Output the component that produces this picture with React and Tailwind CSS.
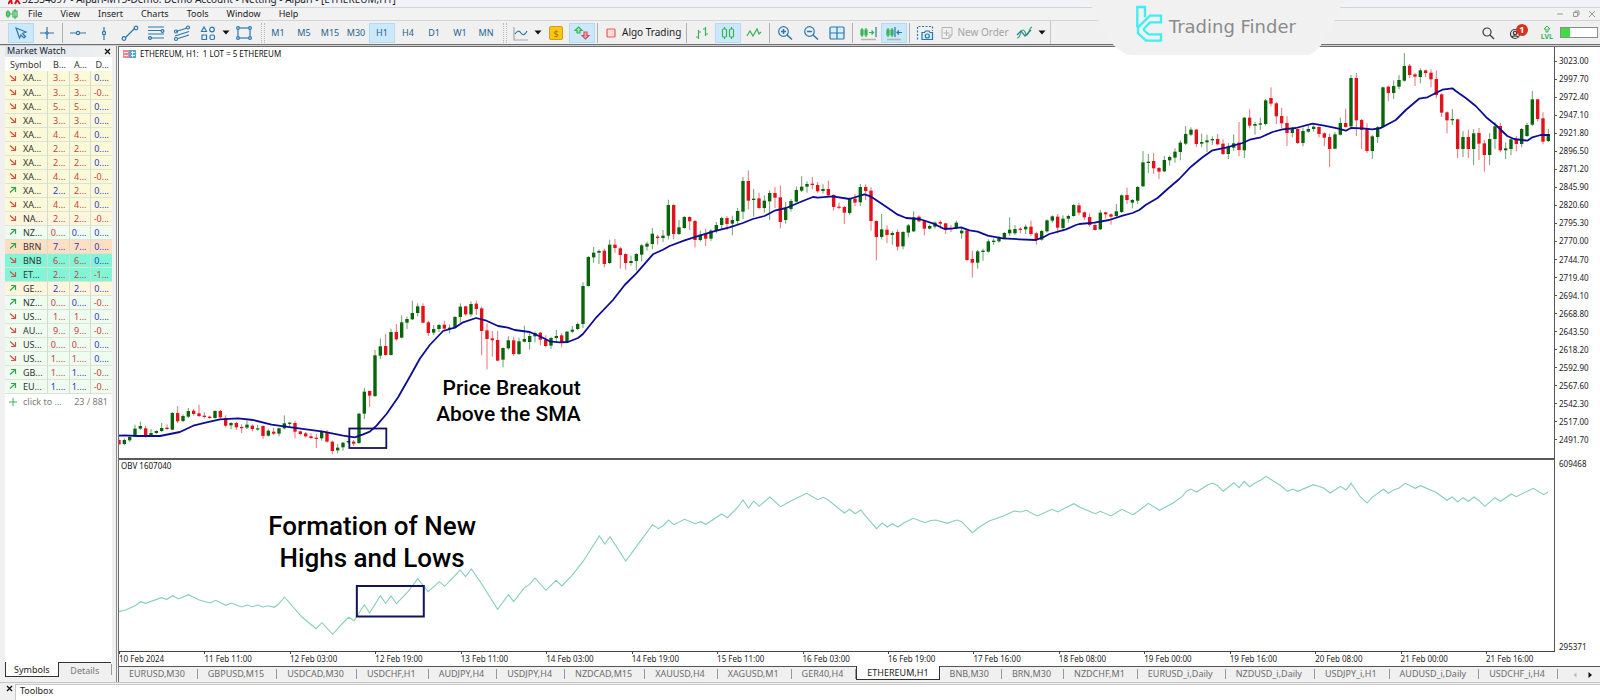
import React from 'react';

const BLUE = '#2a78ad';
const GREEN = '#35b558';

// --- CHART DATA ---
// Every candle: direction (g up, r down), high, body top, body bottom, low.
// Values are thirds of a pixel below the span's own top.
const CANDLE_SPANS = [
  {
    top: 213,
    rows:
      'r 536 540 553 553,g 535 540 552 556,g 528 531 541 545,g 494 506 528 531,g 485 498 506 510,r 498 505 530 533,g 507 519 527 531,g 511 513 519 522,g 489 504 513 516,r 493 503 507 510,g 456 459 509 511,r 438 459 484 489,g 463 468 483 487,g 444 453 470 474,r 447 452 462 467,r 434 460 468 472,r 457 467 471 475,r 467 470 474 476,g 451 453 474 476,r 450 453 472 476,r 466 474 497 502,g 486 489 496 508,r 486 489 502 510,r 493 501 504 519,g 481 494 503 507,r 493 497 507 514,g 495 505 508 512,r 496 498 528 537,g 508 512 527 530,r 504 515 521 525,' +
      'g 502 505 521 529,g 466 490 505 508,g 486 488 491 502,r 482 489 515 535,r 512 514 522 526,r 516 520 529 533,r 520 529 534 537,r 522 533 536 564,g 512 515 535 542,r 510 516 545 548,r 542 545 573 583,g 552 563 571 580,g 546 548 562 572,g 530 543 547 552,r 540 545 551 558,g 458 461 549 552,g 384 395 461 477,r 391 393 407 441,g 270 286 408 411,g 235 259 287 297,r 222 258 285 287,g 206 216 285 287,r 192 216 238 242,g 166 187 233 235,g 170 177 188 207,g 122 159 178 180,g 130 139 159 169,r 130 138 188 190,r 182 187 219 228,g 195 207 218 225,' +
      'g 192 195 207 216,r 182 194 206 213,g 193 203 207 220,g 168 171 203 206,g 130 140 171 188,r 137 139 163 167,g 124 132 163 170,r 122 131 147 165,r 140 145 213 286,r 190 211 237 328,r 213 235 241 290,r 213 240 302 304,g 262 264 299 322,g 229 241 265 269,r 230 241 282 288,g 233 244 282 285,g 197 237 245 247,g 214 228 246 269,g 214 219 229 247,r 216 218 239 256,r 226 239 258 262,g 230 234 257 267,g 210 228 234 242,r 220 226 246 262,g 213 215 244 247,g 198 209 215 220,g 188 192 207 210,g 67 78 192 204',
  },
  {
    top: 103,
    rows:
      'g 318 321 408 410,g 291 308 322 338,g 298 303 308 342,r 296 302 342 352,g 269 284 339 342,r 267 284 294 308,r 291 295 315 356,r 310 312 339 359,g 317 333 339 347,g 309 312 333 361,g 282 286 314 334,g 275 281 290 302,g 234 251 282 298,r 254 260 264 284,g 240 257 264 276,g 149 165 257 268,r 163 165 252 268,g 210 232 252 255,g 198 201 234 236,r 199 201 214 240,r 210 213 270 292,g 242 254 270 275,r 236 252 266 288,g 238 242 266 273,g 216 225 243 250,g 200 204 225 238,r 198 204 222 240,g 197 210 221 256,g 174 183 213 222,g 81 93 185 207,' +
      'r 61 93 152 178,g 117 146 150 200,r 128 145 174 178,g 136 152 174 188,g 121 129 154 210,r 111 129 143 174,r 106 142 216 235,g 156 176 210 221,g 147 153 177 185,g 109 120 155 158,g 79 110 122 126,g 94 102 110 128,r 81 101 105 118,r 96 105 124 128,g 103 117 123 130,r 92 117 136 138,r 132 135 171 182,r 158 170 173 178,r 168 171 188 222,g 142 146 189 195,r 132 146 158 168,g 102 111 157 168,r 103 111 123 150,r 112 122 213 242,r 211 213 261 331,g 192 238 261 268,r 226 239 255 279,g 244 249 255 284,r 238 246 290 302,g 243 246 289 298,g 222 226 248 262,' +
      'g 184 202 244 246,r 196 200 214 217,r 211 213 236 256,g 224 228 236 238,g 214 218 230 236,r 211 216 221 236,r 218 220 238 252,r 225 234 238 246,g 212 218 235 238,g 232 242 250 266,r 239 241 330 334,r 302 327 338 383,g 300 304 338 356,g 296 302 306 332,g 268 274 305 308,g 265 272 276 284,g 258 262 274 278,g 246 249 264 268,g 202 239 250 258,g 225 237 250 254,r 232 236 239 250,g 224 230 238 252,r 212 230 252 258,r 246 250 269 284,g 240 243 269 272,g 208 211 244 248,g 196 199 212 218,r 192 200 233 250,g 196 206 234 244,g 194 198 206 218,g 162 165 198 200,r 158 166 188 196,r 185 187 202 210',
  },
  {
    top: -7,
    rows:
      'r 520 531 555 560,r 550 555 570 572,g 510 518 568 570,r 515 517 523 535,r 520 523 530 554,g 492 514 528 531,g 463 466 516 519,r 443 465 480 492,g 477 480 488 505,g 438 441 482 492,g 333 367 439 441,g 342 365 369 399,r 339 363 385 402,r 381 384 395 417,g 348 360 394 396,g 347 351 361 377,g 325 335 353 368,g 301 308 336 361,g 258 282 311 315,g 262 269 284 288,r 267 269 312 321,g 281 306 311 322,g 284 301 307 336,g 289 297 301 315,r 282 297 313 316,r 298 311 342 345,g 309 321 342 357,g 283 310 323 333,r 246 308 330 348,g 231 233 331 354,' +
      'r 208 233 257 265,g 246 252 257 284,g 233 250 254 270,g 177 181 252 256,r 142 174 191 199,r 186 190 229 252,r 203 228 250 264,r 229 249 279 318,g 261 266 279 292,r 265 267 309 312,g 262 273 309 319,g 257 267 275 278,g 256 260 267 275,r 259 261 282 292,r 277 280 293 318,r 281 291 327 381,g 276 283 326 328,g 233 249 284 287,r 206 249 261 263,g 105 114 259 265,r 99 114 241 288,r 237 240 270 327,r 250 264 333 339,g 285 289 333 357,g 258 262 291 309,g 140 142 261 264,r 137 140 159 184,g 121 138 159 177,g 105 120 140 148,g 39 78 122 125,' +
      'r 72 77 105 114,r 100 103 110 138,g 85 91 111 130,r 89 91 99 112,r 88 98 118 142,r 92 117 165 174,r 160 163 218 231,r 214 217 241 280,g 207 237 241 255,r 236 238 327 354,g 273 291 327 352,r 269 291 327 354,g 268 280 327 375,r 264 279 311 360,r 300 310 345 395,g 279 297 345 375,g 247 259 297 327,r 248 258 331 337,g 307 325 331 357,g 295 298 327 346,r 288 299 312 334,g 264 267 312 322,g 249 255 288 291,g 153 178 254 258,r 176 178 237 244,r 217 235 305 313,g 267 283 303 306',
  },
];

const CANDLES = CANDLE_SPANS.flatMap(({ top, rows }) =>
  rows.split(',').map((row) => {
    const [dir, ...v] = row.split(' ');
    const [high, open, close, low] = v.map((n) => top + Number(n) / 3);
    return { dir, high, open, close, low };
  })
);

const toPoints = (spans) =>
  spans
    .flatMap(({ x, y, sx, pts }) =>
      pts.split(' ').map((p) => {
        const [px, py] = p.split(',').map(Number);
        return `${(x + px / sx).toFixed(1)},${(y + py / 3).toFixed(1)}`;
      })
    )
    .join(' ');

const SMA = toPoints([
  { x: -9, y: 213, sx: 3, pts: '27,527 45,526 80,528 150,528 210,516 250,497 290,487 330,478 385,475 430,480 485,494 550,503 640,515 700,527 735,532 760,523 780,515 800,497 830,462 865,412 900,350 930,296 960,255 1000,213 1035,203 1060,187 1099,174 1130,182 1165,198 1195,203 1215,210 1260,216 1295,231 1320,244 1350,247 1375,246 1405,234' },
  { x: 451, y: 103, sx: 3, pts: '40,552 80,502 130,450 165,405 200,370 250,313 280,299 300,288 345,271 380,260 430,245 480,232 520,219 550,207 585,198 615,182 650,174 700,153 730,141 745,143 790,139 840,147 885,133 905,140 950,170 985,194 1010,204 1050,207 1090,220 1125,237 1150,235 1175,232 1200,241 1225,245 1255,257 1300,265 1350,268 1400,270 1425,260 1440,252 1490,238 1520,225' },
  { x: 961, y: -7, sx: 3, pts: '0,552 45,548 90,540 130,527 160,519 180,510 200,494 235,474 265,447 300,417 335,380 370,352 400,331 440,323 490,309 515,298 545,292 580,276 610,268 650,264 700,251 735,257 775,265 800,272 815,264 850,265 880,268 905,264 950,240 980,210 1020,176 1045,172 1090,149 1120,145 1130,153 1160,174 1190,198 1225,235 1250,255 1285,288 1305,297 1345,302 1360,292 1385,285 1412,285' },
]);

const OBV = toPoints([
  { x: -9, y: -10, sx: 2.24, pts: '20,485 35,480 55,468 69,455 80,460 115,443 127,448 141,437 153,447 176,434 200,450 224,459 237,451 260,466 272,459 295,471 307,465 319,470 331,465 343,471 355,467 368,472 378,462 391,441 430,501 462,536 475,518 499,553 520,522 535,502 547,512 570,464 582,489 606,437 618,460 630,438 642,461 668,425 690,386 713,425 738,395 750,409 785,360 797,380 810,357 830,395 869,478 893,434 905,455 929,413 940,404 953,384 977,421 1000,391 1013,408 1035,377 1060,335 1097,258 1109,282 1121,260 1156,333 1190,271 1216,224 1229,236 1240,227 1252,210 1264,224 1288,208 1312,221 1324,215 1336,223 1371,192 1384,203 1408,170 1419,150 1431,174 1443,153 1455,169 1479,141 1503,170 1525,154' },
  { x: 681, y: -10, sx: 1.96, pts: '14,130 36,149 47,142 58,152 88,189 98,178 109,191 120,180 132,202 151,236 162,219 172,231 182,221 193,231 205,218 223,205 246,218 256,212 267,210 290,220 308,210 318,215 339,248 350,234 372,213 400,198 421,183 434,186 445,181 466,198 495,178 507,186 520,175 538,161 550,172 580,191 590,184 611,198 632,178 654,194 670,177 684,160 706,181 732,160 750,140 760,122 768,117 779,126 800,105 810,99 820,107 831,124 852,98 862,113 872,94 883,110 893,99 904,91 915,79 945,108 957,124 967,117 977,124 1008,104 1028,114 1041,129 1061,109 1072,120 1082,100 1100,141 1113,159 1123,142 1145,118 1155,130 1165,120 1176,114 1188,100 1208,115 1218,107 1248,127 1270,151 1280,141 1291,156 1301,143 1312,154 1323,141 1333,152 1344,169 1364,143 1375,154 1396,132 1406,140 1439,115 1460,134 1468,126' },
]);

const PRICES = Array.from({ length: 22 }, (_, i) => (3023 - i * 25.3).toFixed(2));

const TIMES = [
  '10 Feb 2024', '11 Feb 11:00', '12 Feb 03:00', '12 Feb 19:00', '13 Feb 11:00', '14 Feb 03:00',
  '14 Feb 19:00', '15 Feb 11:00', '16 Feb 03:00', '16 Feb 19:00', '17 Feb 16:00', '18 Feb 08:00',
  '19 Feb 00:00', '19 Feb 16:00', '20 Feb 08:00', '21 Feb 00:00', '21 Feb 16:00',
];

const CHART_TABS = [
  'EURUSD,M30', 'GBPUSD,M15', 'USDCAD,M30', 'USDCHF,H1', 'AUDJPY,H4', 'USDJPY,H4', 'NZDCAD,M15',
  'XAUUSD,H4', 'XAGUSD,M1', 'GER40,H4', 'ETHEREUM,H1', 'BNB,M30', 'BRN,M30', 'NZDCHF,M1',
  'EURUSD_i,Daily', 'NZDUSD_i,Daily', 'USDJPY_i,H1', 'AUDUSD_i,Daily', 'USDCHF_i,H4',
];

// --- MARKET WATCH DATA ---
// arrow, symbol, bid, ask, daily, colours of the three numbers, row tint
const QUOTES = [
  ['d', 'XA...', '3...', '3...', '0....', 'rrb', 'y'],
  ['d', 'XA...', '3...', '3...', '-0...', 'rrr', 'y'],
  ['d', 'XA...', '5...', '5...', '0....', 'rrb', 'y'],
  ['d', 'XA...', '3...', '3...', '0....', 'rrb', 'y'],
  ['d', 'XA...', '4...', '4...', '0....', 'rrb', 'y'],
  ['d', 'XA...', '2...', '2...', '0....', 'rrb', 'y'],
  ['d', 'XA...', '2...', '2...', '0....', 'rrb', 'y'],
  ['d', 'XA...', '4...', '4...', '-0...', 'rrr', 'y'],
  ['u', 'XA...', '2...', '2...', '0....', 'brb', 'y'],
  ['d', 'XA...', '4...', '4...', '0....', 'rrb', 'y'],
  ['d', 'NA...', '2...', '2...', '-0...', 'rrr', 'c'],
  ['u', 'NZ...', '0....', '0....', '0....', 'rbb', 'g'],
  ['u', 'BRN', '7...', '7...', '0....', 'bbb', 'o'],
  ['d', 'BNB', '6...', '6...', '0....', 'rrb', 't'],
  ['d', 'ET...', '2...', '2...', '-1...', 'rrr', 't'],
  ['u', 'GE...', '2...', '2...', '0....', 'bbb', 'c'],
  ['u', 'NZ...', '0....', '0....', '-0...', 'rbr', 'g'],
  ['d', 'US...', '1...', '1...', '0....', 'rrb', 'g'],
  ['d', 'AU...', '9...', '9...', '-0...', 'rrr', 'g'],
  ['d', 'US...', '0....', '0....', '0....', 'rrb', 'g'],
  ['d', 'US...', '1....', '1....', '0....', 'rrb', 'g'],
  ['u', 'GB...', '1....', '1....', '-0...', 'rbr', 'g'],
  ['u', 'EU...', '1....', '1....', '-0...', 'bbr', 'g'],
];

const TINT = {
  y: 'bg-[#fbfad8]',
  c: 'bg-[#fdf6dc]',
  g: 'bg-[#effcf0]',
  o: 'bg-[#ffdfc2]',
  t: 'bg-[#80f6d6]',
};
const INK = { r: 'text-[#c4443c]', b: 'text-[#3434c4]' };

// --- SMALL PARTS ---
const Icon = ({ children, color = BLUE, w = 18, className = '' }) => (
  <svg width={w} height="18" viewBox={`0 0 ${w} 18`} fill="none" stroke={color} strokeWidth="1.2" className={`shrink-0 ${className}`}>
    {children}
  </svg>
);

const Tool = ({ label, active, children }) => (
  <button
    aria-label={label}
    className={`flex h-5 w-[26px] shrink-0 items-center justify-center ${active ? 'bg-[#cce8fb] outline outline-1 -outline-offset-1 outline-[#b4daf4]' : ''}`}
  >
    {children}
  </button>
);

const Sep = () => <div className="mx-[2px] h-5 w-px shrink-0 bg-[#b0b0b0]" />;
const Grip = () => <div className="ml-1 h-5 w-1 shrink-0 border-x border-dotted border-[#b8b8b8]" />;
const Caret = () => (
  <svg width="8" height="5" viewBox="0 0 8 5" className="mx-px shrink-0">
    <path d="M0.5 0.5H7.5L4 4.5Z" fill="#111" />
  </svg>
);

const TitleBar = () => (
  <header className="flex h-[7px] items-end overflow-hidden bg-[#f2f3f9] pl-2">
    <svg width="14" height="7" viewBox="0 0 14 7" className="shrink-0">
      <path d="M0 4L3 0L4 4M7 4L9 0L12 4" stroke="#d01818" strokeWidth="2" fill="none" />
    </svg>
    <h1 className="pb-[3px] text-[10px] leading-[10px] whitespace-nowrap text-[#222]">
      52534097 - Alpari-MT5-Demo: Demo Account - Netting - Alpari - [ETHEREUM,H1]
    </h1>
  </header>
);

const MenuBar = () => (
  <nav className="flex h-[14px] items-center border-y border-[#d4d4d4] bg-[#f2f2f2] pl-[5px] text-[9px] text-[#222]">
    <Icon w={14} color={GREEN}>
      <path d="M3 5V13M3 7H1.500V11H4.500V7ZM10 4V14M8 6H12V12H8ZM4.500 9H8" />
    </Icon>
    <div className="flex flex-1 gap-[18px] pl-[9px]">
      {['File', 'View', 'Insert', 'Charts', 'Tools', 'Window', 'Help'].map((m) => (
        <button key={m}>{m}</button>
      ))}
    </div>
    <div className="flex items-center gap-2 pr-1 text-[#9a9a9a]">
      <button aria-label="Minimize">
        <svg width="8" height="8" viewBox="0 0 8 8"><path d="M1 4H7" stroke="currentColor" /></svg>
      </button>
      <button aria-label="Restore">
        <svg width="8" height="8" viewBox="0 0 8 8" fill="none" stroke="currentColor"><path d="M1.500 2.500H5.500V6.500H1.500ZM3 2.500V1H7V5H5.500" /></svg>
      </button>
      <button aria-label="Close">
        <svg width="8" height="8" viewBox="0 0 8 8"><path d="M1 1L7 7M7 1L1 7" stroke="currentColor" /></svg>
      </button>
    </div>
  </nav>
);

const Toolbar = () => (
  <div className="flex h-[23px] items-center overflow-hidden bg-[#f0f0f0] pl-2 text-[9px] text-[#222]">
    <Tool label="Cursor" active>
      <Icon><path d="M4 4L14 8L10.500 9.500L13.500 12.500L12 14L9 11L7.500 14Z" /></Icon>
    </Tool>
    <Tool label="Crosshair">
      <Icon><path d="M9 3V7.500M9 10.500V15M2 9H7.500M10.500 9H16M7.500 9L9 7.500L10.500 9L9 10.500Z" /></Icon>
    </Tool>
    <Sep />
    <Tool label="Horizontal line">
      <Icon><path d="M1 9H7M11 9H17" /><circle cx="9" cy="9" r="1.600" /></Icon>
    </Tool>
    <Tool label="Vertical line">
      <Icon><path d="M9 3V7M9 11V16" /><circle cx="9" cy="9" r="1.600" /></Icon>
    </Tool>
    <Tool label="Trendline">
      <Icon><path d="M4 14L14 4" /><circle cx="3" cy="14.500" r="1.800" /><circle cx="15" cy="4" r="1.800" /></Icon>
    </Tool>
    <Tool label="Fibonacci">
      <Icon><path d="M1 3H17M1 6.500H14M1 10H17M4 14H17M1 14H2" /><circle cx="15.500" cy="7" r="1.400" /><circle cx="3" cy="14" r="1.400" /></Icon>
    </Tool>
    <Tool label="Channel">
      <Icon><path d="M3 7.500L14 4M2 12L16 7.500M5 14.500L16 11" /><circle cx="3" cy="7.500" r="1.500" /><circle cx="15" cy="3.500" r="1.500" /><circle cx="3" cy="15" r="1.500" /></Icon>
    </Tool>
    <Tool label="Shapes">
      <Icon><path d="M5 3L7.500 7.500H2.500ZM3 11H7.500V15.500H3Z" /><circle cx="13" cy="5.500" r="2.300" /><rect x="11" y="11" width="4.500" height="4.500" rx="1.500" /></Icon>
    </Tool>
    <Caret />
    <Tool label="Rectangle">
      <Icon><rect x="3" y="4" width="12" height="10" /><g fill="#f0f0f0"><circle cx="3" cy="4" r="1.400" /><circle cx="15" cy="4" r="1.400" /><circle cx="3" cy="14" r="1.400" /><circle cx="15" cy="14" r="1.400" /></g></Icon>
    </Tool>
    <Grip />
    {['M1', 'M5', 'M15', 'M30', 'H1', 'H4', 'D1', 'W1', 'MN'].map((t) => (
      <Tool key={t} label={t} active={t === 'H1'}>
        <span className="text-[#24648f]">{t}</span>
      </Tool>
    ))}
    <Grip />
    <Tool label="Chart type">
      <Icon><path d="M3 3V16H17" stroke="#a8a8a8" /><path d="M4 10C6 7 8 6 10 9S14 11 16 7" /></Icon>
    </Tool>
    <Caret />
    <Tool label="Depth">
      <svg width="14" height="14" viewBox="0 0 14 14">
        <rect x="0.500" y="0.500" width="13" height="13" rx="1.500" fill="#f9c613" stroke="#d89c0c" />
        <text x="7" y="10.500" textAnchor="middle" fontSize="9" fill="#a87200">$</text>
      </svg>
    </Tool>
    <Tool label="Trade arrows" active>
      <Icon color={GREEN}>
        <path d="M5.500 3L9 6.500H7V9H4V6.500H2Z" fill="#a8e4b4" />
        <path d="M12.500 15L16 11.500H14V8H11V11.500H9Z" stroke="#d8505c" fill="#f2a4ac" />
      </Icon>
    </Tool>
    <Sep />
    <button className="flex h-5 shrink-0 items-center gap-[6px] pr-[3px] pl-[6px] text-[10px] text-[#1c1c1c]">
      <svg width="10" height="10" viewBox="0 0 10 10"><rect x="1" y="1" width="8" height="8" rx="1" fill="#fbdcd8" stroke="#e0605a" strokeWidth="1.200" /></svg>
      Algo Trading
    </button>
    <Sep />
    <Tool label="Bars">
      <Icon color={GREEN}><path d="M5.500 6V15M3 13H5.500M5.500 8H8M12.500 3V12M10 5H12.500M12.500 10H15" /></Icon>
    </Tool>
    <Tool label="Candles" active>
      <Icon color={GREEN}><path d="M5.500 3V5M5.500 13V15M12.500 3V5M12.500 13V15" /><rect x="3.500" y="5" width="4" height="8" rx="1" /><rect x="10.500" y="5" width="4" height="8" rx="1" /></Icon>
    </Tool>
    <Tool label="Line">
      <Icon color={GREEN}><path d="M2 12L5 7L8 12L12 5L14 10L16 8" /></Icon>
    </Tool>
    <Sep />
    <Tool label="Zoom in">
      <Icon><circle cx="7.500" cy="7.500" r="4.800" /><path d="M11 11L16 15.500M5 7.500H10M7.500 5V10" strokeWidth="1.600" /></Icon>
    </Tool>
    <Tool label="Zoom out">
      <Icon><circle cx="7.500" cy="7.500" r="4.800" /><path d="M11 11L16 15.500M5 7.500H10" strokeWidth="1.500" /></Icon>
    </Tool>
    <Tool label="Tile windows">
      <Icon><rect x="2" y="3" width="14" height="12" rx="1" fill="#d8eefc" /><path d="M9 3V15M2 9H16" /></Icon>
    </Tool>
    <Sep />
    <Tool label="Auto scroll">
      <Icon color={GREEN}><path d="M3 4V13M7 4V13M2 6H4V11H2ZM6 6H8V11H6ZM10 8.500H14M12.500 6.500L14.500 8.500L12.500 10.500" /><path d="M17 3V13" stroke={BLUE} /><path d="M2 15.500H17" stroke="#b4b4b4" strokeWidth="1.500" /></Icon>
    </Tool>
    <Tool label="Chart shift" active>
      <Icon color={GREEN}><path d="M3 4V13M7 4V13M2 6H4V11H2ZM6 6H8V11H6Z" /><path d="M10 3V13M17 8.500H12M14 6.500L12 8.500L14 10.500" stroke={BLUE} /><path d="M2 15.500H16" stroke="#b4b4b4" strokeWidth="1.500" /></Icon>
    </Tool>
    <Sep />
    <Tool label="Screenshot">
      <Icon><path d="M1.500 15.500V2.500H16.500V7" strokeDasharray="2 1.500" /><path d="M6 8.500H8.500L9.500 7H13L14 8.500H16.500V15.500H6Z" fill="#d8eefc" /><circle cx="11.300" cy="12" r="2" /></Icon>
    </Tool>
    <button className="flex h-5 shrink-0 items-center gap-[3px] px-[2px] text-[10px] text-[#a4a4a4]">
      <svg width="14" height="14" viewBox="0 0 14 14" fill="none" stroke="#b4b4b4"><path d="M2 1.500H12V9L9 12.500H2ZM12 9H9V12.500M6.500 4V10M3.500 7H9.500" /></svg>
      New Order
    </button>
    <Tool label="Indicators">
      <Icon color={GREEN}><path d="M2 14C6 14 5 6 8 6S10 12 12 11S14 4 17 3" /><path d="M2 11L6 7L10 12L16 6" stroke={BLUE} /></Icon>
    </Tool>
    <Caret />
    <div className="mx-[3px] h-full w-px shrink-0 bg-[#c8c8c8]" />

    <div className="ml-auto flex items-center gap-[14px] pr-[2px]">
      <button aria-label="Search">
        <Icon w={14} color="#3a3a3a"><circle cx="6" cy="8" r="4" /><path d="M9 11L13 15" /></Icon>
      </button>
      <button aria-label="Account" className="relative">
        <Icon w={18} color="#3a3a3a"><circle cx="6" cy="10" r="4.500" /><circle cx="6" cy="9" r="1.700" /><path d="M3 13C4 11.500 8 11.500 9 13" /></Icon>
        <span className="absolute top-0 left-[7px] flex h-3 w-3 items-center justify-center rounded-full bg-[#d8341c] text-[9px] leading-3 font-bold text-white">1</span>
      </button>
      <div className="flex items-center gap-[7px]">
        <div className="flex flex-col items-center text-[7px] leading-[7px] font-bold text-[#35b558]">
          <svg width="8" height="8" viewBox="0 0 8 8" fill="none" stroke="currentColor"><path d="M4 1L7 4H5V7H3V4H1Z" /></svg>
          LVL
        </div>
        <div className="h-[11px] w-[38px] border border-[#8c8c8c] bg-white">
          <div className="h-full w-[26%] bg-[#3fdc46]" />
        </div>
      </div>
    </div>
  </div>
);

const BrandBadge = () => (
  <div className="absolute top-0 left-[67.8%] h-[55px] w-[262px]">
    <svg width="262" height="55" viewBox="0 0 262 55" className="absolute inset-0">
      <path d="M0 0H262C254 6 252 14 249 22L237 43Q236 46 233 48L228 53Q226 55 222 55H47Q42 55 39 53L32 48Q29 46 27 43L13 20C10 12 8 6 0 0Z" fill="#f1f1f1" />
      <g transform="translate(-5 0) scale(0.3333)" fill="none" stroke="#3deff2" strokeWidth="7">
        <path d="M172 82V21H195V52" />
        <path d="M243 47H210L174 82V100L198 122H243V103H206L192 91V86L210 67H243Z" />
      </g>
    </svg>
    <span className="absolute top-[15px] left-[84px] font-['DejaVu_Sans',sans-serif] text-[18px] leading-6 font-normal whitespace-nowrap text-[#8b8b8b]">Trading Finder</span>
  </div>
);

const MarketWatch = () => (
  <aside className="flex w-[117px] shrink-0 flex-col border-r border-[#8a8a8a] bg-[#f0f0f0] pr-1 pl-[5px] text-[9px] text-[#333]">
    <div className="flex h-[11px] items-center justify-between bg-gradient-to-r from-[#dbe7f5] to-[#f0f0f0] pr-px pl-[2px] leading-[9px] text-[#222]">
      <h2 className="pb-[2px]">Market Watch</h2>
      <button aria-label="Close Market Watch">
        <svg width="7" height="7" viewBox="0 0 7 7"><path d="M1 1L6 6M6 1L1 6" stroke="#111" strokeWidth="1.300" /></svg>
      </button>
    </div>
    <div className="flex-1 bg-white">
      <table className="w-full table-fixed border-collapse">
        <colgroup>
          <col className="w-[42px]" />
          <col className="w-[22px]" />
          <col className="w-[21px]" />
          <col />
        </colgroup>
        <thead>
          <tr className="h-[14px] leading-[13px]">
            <th className="p-0 pl-[5px] text-left font-normal">Symbol</th>
            <th className="p-0 pr-[3px] text-right font-normal">B...</th>
            <th className="p-0 pr-[3px] text-right font-normal">A...</th>
            <th className="p-0 pr-[3px] text-right font-normal">D...</th>
          </tr>
        </thead>
        <tbody>
          {QUOTES.map(([dir, name, bid, ask, daily, ink, tint], i) => (
            <tr key={i} className={`h-[14px] border-b border-[#dfe3d4] leading-[13px] ${TINT[tint]}`}>
              <td className="border-r border-[#d4dccf] p-0">
                <div className="flex items-center gap-[6px] pl-1">
                  <svg width="8" height="8" viewBox="0 0 8 8" fill="none" stroke={dir === 'u' ? '#2fa84c' : '#cf5548'} strokeWidth="1.200">
                    <path d={dir === 'u' ? 'M1 6.500L6 2M2 1.500H6.500V6' : 'M1 1.500L6 6M6.500 2V6.500H2'} />
                  </svg>
                  <span>{name}</span>
                </div>
              </td>
              <td className={`border-r border-[#d4dccf] p-0 pr-[3px] text-right ${INK[ink[0]]}`}>{bid}</td>
              <td className={`border-r border-[#d4dccf] p-0 pr-[3px] text-right ${INK[ink[1]]}`}>{ask}</td>
              <td className={`p-0 pr-[3px] text-right ${INK[ink[2]]}`}>{daily}</td>
            </tr>
          ))}
        </tbody>
      </table>
      <div className="flex h-4 items-center pr-1 pl-1 text-[#7c7c7c]">
        <svg width="8" height="8" viewBox="0 0 8 8"><path d="M4 0V8M0 4H8" stroke="#35b558" /></svg>
        <span className="pl-[6px]">click to ...</span>
        <span className="ml-auto">23 / 881</span>
      </div>
    </div>
    <div className="flex h-[15px] items-stretch">
      <button className="border-x border-b border-[#333] bg-white px-2 leading-[13px] text-[#222]">Symbols</button>
      <button className="flex-1 border-t border-[#333] leading-[13px] text-[#777]">Details</button>
      <div className="my-[2px] w-px bg-[#999]" />
    </div>
    <div className="h-[5px]" />
  </aside>
);

const PricePlot = () => (
  <div className="relative min-w-0 flex-1 bg-white">
    <svg viewBox="0 0 1436 411" preserveAspectRatio="none" className="absolute inset-0 h-full w-full">
      {CANDLES.map((c, i) => {
        const x = i * 5.337;
        const color = c.dir === 'g' ? '#0a640c' : '#e3121a';
        return (
          <g key={i} fill={color}>
            <rect x={x - 0.5} y={c.high} width="1" height={c.low - c.high} opacity="0.6" />
            <rect x={x - 1.7} y={c.open} width="3.4" height={Math.max(c.close - c.open, 1.2)} />
          </g>
        );
      })}
      <polyline points={SMA} fill="none" stroke="#0c0c94" strokeWidth="1.8" strokeLinejoin="round" />
      <rect x="230.500" y="381.500" width="37" height="19.500" fill="none" stroke="#12125e" strokeWidth="1.800" />
    </svg>
    <div className="absolute top-px left-1 flex items-center gap-1 text-[8px] leading-3 text-[#111]">
      <svg width="13" height="8" viewBox="0 0 13 8">
        <rect width="6" height="8" fill="#ea8a8a" />
        <rect x="6" width="7" height="8" fill="#5fa4cc" />
        <path d="M1 2.500H5M1 5.500H5M8 2.500H12M8 5.500H12M9.500 1V7" stroke="#fff" strokeWidth="0.800" />
      </svg>
      <span className="whitespace-pre">ETHEREUM, H1:  1 LOT = 5 ETHEREUM</span>
    </div>
    <p className="absolute top-[79.8%] left-[22.1%] text-right font-[Roboto] text-[21px] leading-[26px] font-medium whitespace-nowrap text-black">
      Price Breakout
      <br />
      Above the SMA
    </p>
  </div>
);

const ObvPlot = () => (
  <div className="relative min-w-0 flex-1 bg-white">
    <svg viewBox="0 0 1436 191" preserveAspectRatio="none" className="absolute inset-0 h-full w-full">
      <polyline points={OBV} fill="none" stroke="#86cdbb" strokeWidth="1.100" />
      <rect x="238" y="126" width="67" height="30.500" fill="none" stroke="#12125e" strokeWidth="2" />
    </svg>
    <span className="absolute top-0 left-[2px] text-[8px] leading-[11px] text-[#111]">OBV 1607040</span>
    <p className="absolute top-[26.2%] left-[10.4%] text-center font-[Roboto] text-[26px] leading-8 font-medium whitespace-nowrap text-black">
      Formation of New
      <br />
      Highs and Lows
    </p>
  </div>
);

const ChartWindow = () => (
  <section className="ml-[1px] flex min-w-0 flex-1 flex-col border-t border-l border-[#6c6c6c] bg-white text-[8px] text-[#222]">
    <div className="flex flex-[411]">
      <PricePlot />
      <div className="flex w-[46px] shrink-0 flex-col justify-between border-l border-[#555] pt-2 pb-3 leading-3">
        {PRICES.map((p) => (
          <div key={p} className="flex items-center gap-[2px]">
            <i className="h-px w-[2px] bg-[#555]" />
            {p}
          </div>
        ))}
      </div>
    </div>
    <div className="mr-[45px] h-[2px] bg-[#5a5a5a]" />
    <div className="flex flex-[191]">
      <ObvPlot />
      <div className="flex w-[46px] shrink-0 flex-col justify-between border-l border-[#555] pl-1 leading-[8px]">
        <span>609468</span>
        <span>295371</span>
      </div>
    </div>
    <div className="mr-[45px] h-px bg-[#444]" />
    <div className="mr-[45px] flex h-[14px] overflow-hidden">
      {TIMES.map((t) => (
        <div key={t} className="w-[5.95%] shrink-0 leading-[12px] whitespace-nowrap">
          <i className="block h-[2px] w-px bg-[#444]" />
          <div className="-mt-px">{t}</div>
        </div>
      ))}
    </div>
    <nav className="flex h-4 items-stretch border-t border-[#555] bg-[#f0f0f0] text-[9px] text-[#6c6c6c]">
      {CHART_TABS.map((t) =>
        t === 'ETHEREUM,H1' ? (
          <button key={t} className="-mt-px mb-[2px] border-x border-b border-[#333] bg-white px-[10px] leading-[12px] text-[#222]">{t}</button>
        ) : (
          <button key={t} className="flex items-center pb-px pl-[10px] leading-[12px]">
            {t}
            <i className="ml-3 h-[10px] w-px bg-[#999]" />
          </button>
        )
      )}
      <div className="ml-auto flex items-center gap-[11px] pr-2">
        <button aria-label="Scroll tabs left">
          <svg width="4" height="6" viewBox="0 0 4 6"><path d="M3.500 0.500V5.500L0.500 3Z" fill="#bbb" /></svg>
        </button>
        <button aria-label="Scroll tabs right">
          <svg width="4" height="6" viewBox="0 0 4 6"><path d="M0.500 0V6L4 3Z" fill="#111" /></svg>
        </button>
      </div>
    </nav>
  </section>
);

const Toolbox = () => (
  <footer className="flex h-[18px] border-t border-[#c4c4c4] bg-[#f0f0f0] pt-px text-[9px] text-[#222]">
    <button aria-label="Close Toolbox" className="flex w-[15px] justify-center pt-px pl-1">
      <svg width="7" height="7" viewBox="0 0 7 7"><path d="M1 1L6 6M6 1L1 6" stroke="#111" strokeWidth="1.300" /></svg>
    </button>
    <div className="flex-1 border-t border-l border-[#c8c8c8] bg-white pl-1 leading-[12px]">Toolbox</div>
  </footer>
);

export default function App() {
  return (
    <div className="relative flex min-h-screen flex-col bg-[#f0f0f0] font-['Noto_Sans','Open_Sans',sans-serif]">
      <TitleBar />
      <MenuBar />
      <Toolbar />
      <div className="h-[2px] border-t border-[#707070] bg-[#d0d0d0]" />
      <main className="flex flex-1">
        <MarketWatch />
        <ChartWindow />
      </main>
      <Toolbox />
      <BrandBadge />
    </div>
  );
}
